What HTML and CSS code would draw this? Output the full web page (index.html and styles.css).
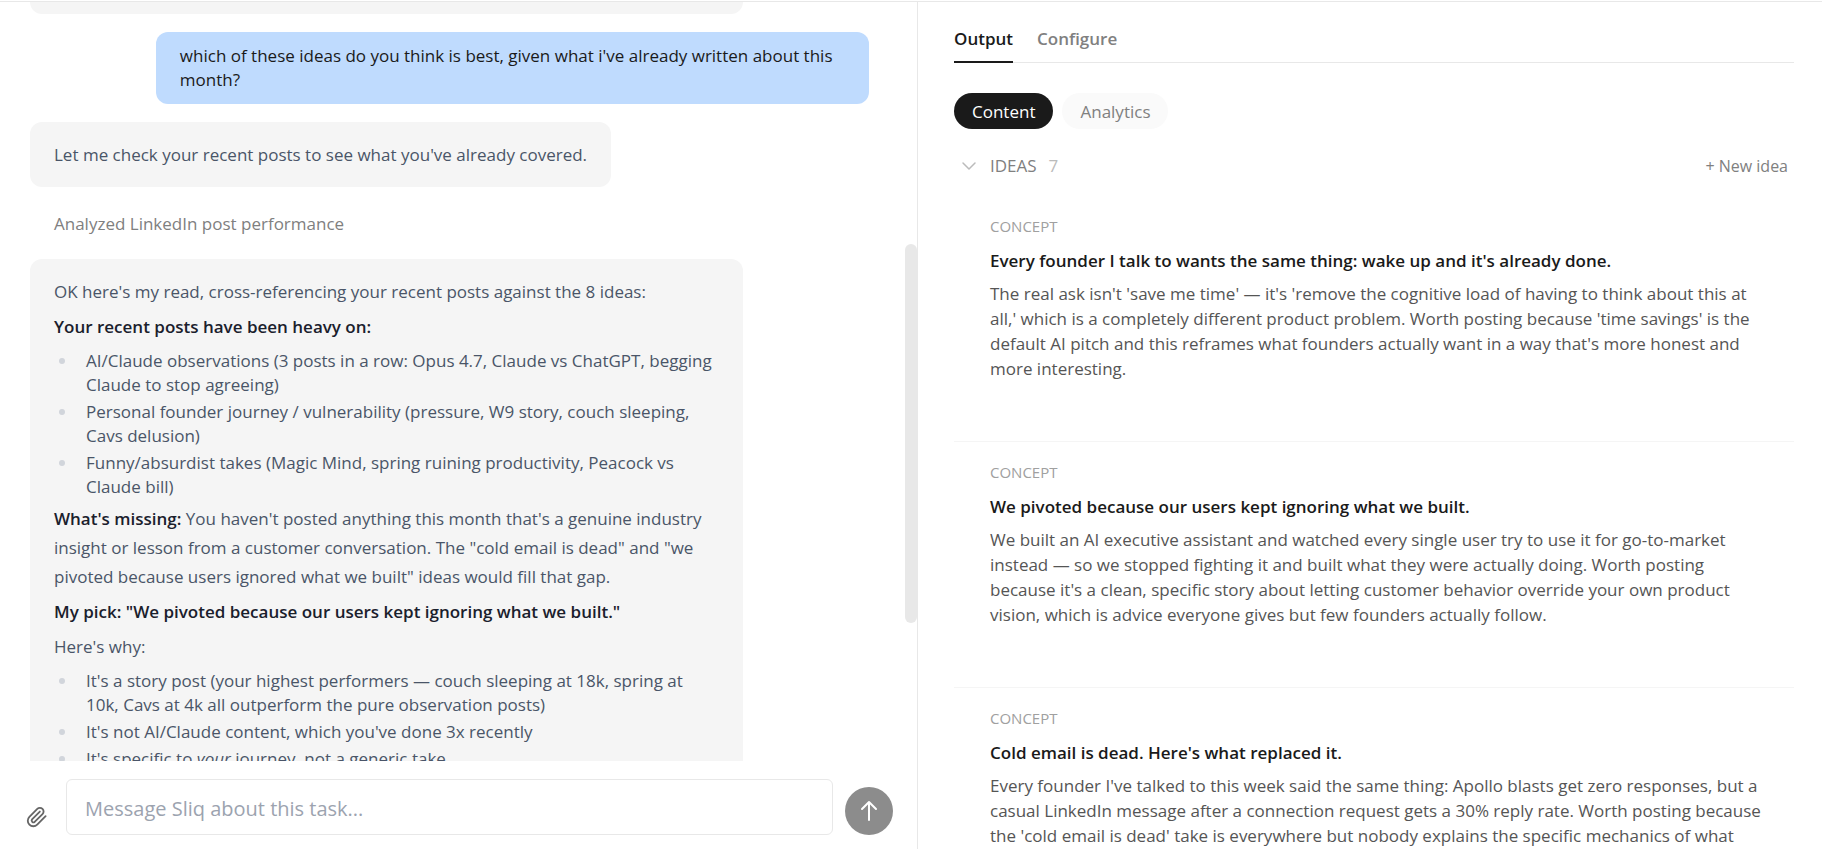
FILE: index.html
```html
<!DOCTYPE html>
<html lang="en">
<head>
    <meta charset="UTF-8">
    <meta name="viewport" content="width=device-width, initial-scale=1.0">
    <title>Sliq</title>
    <link rel="stylesheet" href="styles.css">
</head>
<body>
    <div class="app">
        <section class="chat">
            <div class="messages">
                <div class="bubble bubble-prev"></div>
                <div class="bubble bubble-user">which of these ideas do you think is best, given what i've already written about this<br>month?</div>
                <div class="bubble"><p>Let me check your recent posts to see what you've already covered.</p></div>
                <div class="activity">Analyzed LinkedIn post performance</div>
                <div class="bubble bubble-long">
                    <p>OK here's my read, cross-referencing your recent posts against the 8 ideas:</p>
                    <p><strong>Your recent posts have been heavy on:</strong></p>
                    <ul>
                        <li>AI/Claude observations (3 posts in a row: Opus 4.7, Claude vs ChatGPT, begging<br>Claude to stop agreeing)</li>
                        <li>Personal founder journey / vulnerability (pressure, W9 story, couch sleeping,<br>Cavs delusion)</li>
                        <li>Funny/absurdist takes (Magic Mind, spring ruining productivity, Peacock vs<br>Claude bill)</li>
                    </ul>
                    <p><strong>What's missing:</strong> You haven't posted anything this month that's a genuine industry<br>insight or lesson from a customer conversation. The "cold email is dead" and "we<br>pivoted because users ignored what we built" ideas would fill that gap.</p>
                    <p><strong>My pick: "We pivoted because our users kept ignoring what we built."</strong></p>
                    <p>Here's why:</p>
                    <ul>
                        <li>It's a story post (your highest performers — couch sleeping at 18k, spring at<br>10k, Cavs at 4k all outperform the pure observation posts)</li>
                        <li>It's not AI/Claude content, which you've done 3x recently</li>
                        <li>It's specific to <em>your</em> journey, not a generic take</li>
                    </ul>
                </div>
            </div>
            <form class="composer">
                <button type="button" class="attach" aria-label="Attach file">
                    <svg width="22" height="22" viewBox="0 0 24 24" fill="none" stroke="currentColor" stroke-width="2" stroke-linecap="round" stroke-linejoin="round"><path d="M21.4 11.1l-9.2 9.2a6 6 0 0 1-8.5-8.5l8.6-8.6a4 4 0 1 1 5.7 5.7l-8.6 8.5a2 2 0 0 1-2.8-2.8l8.5-8.5"/></svg>
                </button>
                <input class="message-input" type="text" placeholder="Message Sliq about this task..." aria-label="Message">
                <button type="button" class="send" aria-label="Send">
                    <svg width="24" height="24" viewBox="0 0 24 24" fill="none" stroke="currentColor" stroke-width="2" stroke-linecap="round" stroke-linejoin="round"><path d="M12 21V3M5 10l7-7 7 7"/></svg>
                </button>
            </form>
            <div class="scroll-thumb"></div>
        </section>

        <section class="output">
            <nav class="tabs">
                <button type="button" class="tab active">Output</button>
                <button type="button" class="tab">Configure</button>
            </nav>
            <div class="pills">
                <button type="button" class="pill active">Content</button>
                <button type="button" class="pill">Analytics</button>
            </div>
            <div class="ideas-head">
                <button type="button" class="ideas-toggle">
                    <svg width="18" height="18" viewBox="0 0 18 18" fill="none" stroke="#bbbbbb" stroke-width="1.5" stroke-linecap="round" stroke-linejoin="round"><path d="M3 6l6 6 6-6"/></svg>
                    <span>IDEAS</span>
                    <span class="count">7</span>
                </button>
                <button type="button" class="new-idea">+ New idea</button>
            </div>
            <article class="idea">
                <div class="kind">CONCEPT</div>
                <h3>Every founder I talk to wants the same thing: wake up and it's already done.</h3>
                <p>The real ask isn't 'save me time' — it's 'remove the cognitive load of having to think about this at<br>all,' which is a completely different product problem. Worth posting because 'time savings' is the<br>default AI pitch and this reframes what founders actually want in a way that's more honest and<br>more interesting.</p>
            </article>
            <article class="idea">
                <div class="kind">CONCEPT</div>
                <h3>We pivoted because our users kept ignoring what we built.</h3>
                <p>We built an AI executive assistant and watched every single user try to use it for go-to-market<br>instead — so we stopped fighting it and built what they were actually doing. Worth posting<br>because it's a clean, specific story about letting customer behavior override your own product<br>vision, which is advice everyone gives but few founders actually follow.</p>
            </article>
            <article class="idea">
                <div class="kind">CONCEPT</div>
                <h3>Cold email is dead. Here's what replaced it.</h3>
                <p>Every founder I've talked to this week said the same thing: Apollo blasts get zero responses, but a<br>casual LinkedIn message after a connection request gets a 30% reply rate. Worth posting because<br>the 'cold email is dead' take is everywhere but nobody explains the specific mechanics of what</p>
            </article>
        </section>
    </div>
</body>
</html>
```

FILE: styles.css
```css
* {
    box-sizing: border-box;
}
body {
    margin: 0;
    font-family: "Open Sans", "Noto Sans", sans-serif;
    font-size: 17px;
    color: #1a1a1a;
    background: #ffffff;
}
button {
    border: none;
    padding: 0;
    background: none;
    font: inherit;
    color: inherit;
    cursor: pointer;
}
h3, p, ul {
    margin: 0;
}
strong, h3 {
    font-weight: 600;
}
.app {
    display: grid;
    grid-template-columns: 918fr 904fr;
    height: 100vh;
    padding-top: 1px;
    overflow: hidden;
}

/* Chat column */
.chat {
    position: relative;
    display: flex;
    flex-direction: column;
    min-width: 0;
    min-height: 0;
    border-top: 1px solid #e8e8e8;
    border-right: 1px solid #e8e8e8;
}
.messages {
    flex: 1;
    min-height: 0;
    overflow: hidden;
    display: flex;
    flex-direction: column;
    align-items: flex-start;
    gap: 18px;
    padding: 0 48px 0 30px;
}
.bubble {
    flex-shrink: 0;
    max-width: 85%;
    padding: 18px 24px;
    border-radius: 12px;
    background: #f5f5f5;
    color: #4a5568;
    line-height: 29px;
    white-space: nowrap;
}
.bubble-long {
    width: 85%;
}
.bubble-prev {
    width: 85%;
    height: 12px;
    padding: 0;
    border-radius: 0 0 12px 12px;
}
.bubble-user {
    align-self: flex-end;
    width: 85%;
    padding: 12px 24px;
    background: #bfdbfe;
    color: #1a1a1a;
    line-height: 24px;
}
.bubble p + p {
    margin-top: 6px;
}
.bubble strong {
    color: #1a202c;
}
.bubble ul {
    list-style: none;
    padding: 0 0 0 32px;
    margin: 8px 0 5px;
}
.bubble li {
    position: relative;
    line-height: 24px;
}
.bubble li + li {
    margin-top: 3px;
}
.bubble li::before {
    content: "";
    position: absolute;
    left: -27px;
    top: 9px;
    width: 6px;
    height: 6px;
    border-radius: 50%;
    background: #d1d5db;
}
.activity {
    flex-shrink: 0;
    padding: 7px 24px 5px;
    color: #808080;
    line-height: 24px;
}
.composer {
    display: flex;
    align-items: flex-end;
    gap: 12px;
    padding: 18px 24px 14px;
}
.attach {
    display: flex;
    align-items: center;
    justify-content: center;
    width: 30px;
    height: 36px;
    margin-left: -2px;
    margin-right: 2px;
    color: #666666;
}
.message-input {
    flex: 1;
    min-width: 0;
    height: 56px;
    padding: 2px 18px 0;
    border: 1px solid #e8e8e8;
    border-radius: 6px;
    font: inherit;
    font-size: 20px;
    background: #ffffff;
}
.message-input::placeholder {
    color: #9ca3af;
}
.send {
    display: flex;
    align-items: center;
    justify-content: center;
    width: 48px;
    height: 48px;
    border-radius: 50%;
    background: #8c8c8c;
    color: #ffffff;
}
.scroll-thumb {
    position: absolute;
    top: 242px;
    right: 0;
    width: 12px;
    height: 379px;
    border-radius: 6px;
    background: #e8e8e8;
}

/* Output column */
.output {
    min-width: 0;
    overflow: hidden;
    padding: 25px 28px 0 36px;
    border-top: 1px solid #e8e8e8;
    white-space: nowrap;
}
.tabs {
    display: flex;
    gap: 24px;
    border-bottom: 1px solid #e8e8e8;
}
.tab {
    height: 36px;
    margin-bottom: -1px;
    padding-bottom: 10px;
    border-bottom: 2px solid transparent;
    font-weight: 600;
    line-height: 24px;
    color: #808080;
}
.tab.active {
    border-color: #1a1a1a;
    color: #1a1a1a;
}
.pills {
    display: flex;
    gap: 9px;
    margin-top: 30px;
}
.pill {
    height: 36px;
    padding: 0 18px;
    border-radius: 18px;
    background: #fafafa;
    color: #808080;
}
.pill.active {
    background: #1a1a1a;
    color: #ffffff;
}
.ideas-head {
    display: flex;
    align-items: center;
    justify-content: space-between;
    margin-top: 25px;
    padding: 0 6px;
    font-size: 16px;
    line-height: 24px;
    color: #808080;
}
.ideas-toggle {
    display: flex;
    align-items: center;
    gap: 12px;
    font-size: 17px;
}
.count {
    color: #bbbbbb;
}
.idea {
    height: 246px;
    padding: 18px 30px 0 36px;
    border-bottom: 1px solid #f5f5f5;
}
.ideas-head + .idea {
    margin-top: 18px;
}
.kind {
    font-size: 15px;
    line-height: 24px;
    color: #a0a0a0;
}
.idea h3 {
    margin: 11px 0 8px;
    font-size: 17px;
    line-height: 24px;
}
.idea p {
    color: #555555;
    line-height: 25px;
}
```
